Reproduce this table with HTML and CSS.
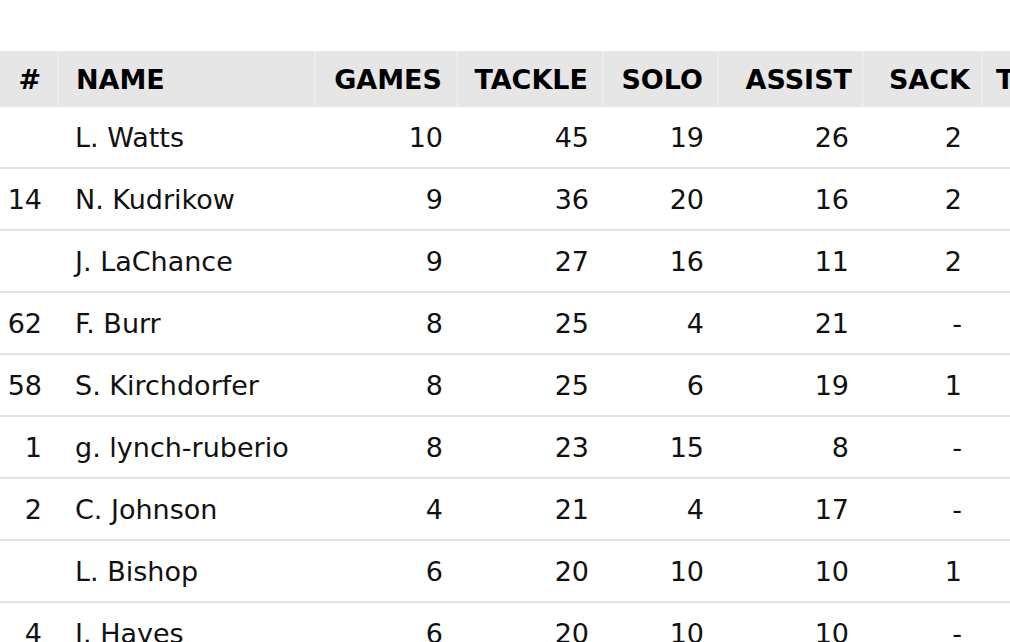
FILE: index.html
```html
<!DOCTYPE html>
<html>
<head>
<meta charset="utf-8">
<link rel="stylesheet" href="styles.css">
</head>
<body>
<div class="wrap">
<table class="stats">
  <colgroup>
    <col class="c-num"><col class="c-name"><col class="c-games"><col class="c-tackle"><col class="c-solo"><col class="c-assist"><col class="c-sack"><col class="c-tfl">
  </colgroup>
  <thead>
    <tr><th class="num">#</th><th class="name">NAME</th><th>GAMES</th><th>TACKLE</th><th>SOLO</th><th class="assist">ASSIST</th><th class="sack">SACK</th><th class="tfl">TFL</th></tr>
  </thead>
  <tbody>
    <tr><td class="num"></td><td class="name">L. Watts</td><td>10</td><td>45</td><td>19</td><td>26</td><td class="sack">2</td><td>5</td></tr>
    <tr><td class="num">14</td><td class="name">N. Kudrikow</td><td>9</td><td>36</td><td>20</td><td>16</td><td class="sack">2</td><td>4</td></tr>
    <tr><td class="num"></td><td class="name">J. LaChance</td><td>9</td><td>27</td><td>16</td><td>11</td><td class="sack">2</td><td>3</td></tr>
    <tr><td class="num">62</td><td class="name">F. Burr</td><td>8</td><td>25</td><td>4</td><td>21</td><td class="sack">-</td><td>-</td></tr>
    <tr><td class="num">58</td><td class="name">S. Kirchdorfer</td><td>8</td><td>25</td><td>6</td><td>19</td><td class="sack">1</td><td>2</td></tr>
    <tr><td class="num">1</td><td class="name">g. lynch-ruberio</td><td>8</td><td>23</td><td>15</td><td>8</td><td class="sack">-</td><td>1</td></tr>
    <tr><td class="num">2</td><td class="name">C. Johnson</td><td>4</td><td>21</td><td>4</td><td>17</td><td class="sack">-</td><td>-</td></tr>
    <tr><td class="num"></td><td class="name">L. Bishop</td><td>6</td><td>20</td><td>10</td><td>10</td><td class="sack">1</td><td>1</td></tr>
    <tr><td class="num">4</td><td class="name">J. Hayes</td><td>6</td><td>20</td><td>10</td><td>10</td><td class="sack">-</td><td>-</td></tr>
  </tbody>
</table>
</div>
</body>
</html>
```
FILE: styles.css
```css
html, body {
  margin: 0;
  padding: 0;
  background: #ffffff;
  overflow: hidden;
}
.wrap {
  padding-top: 51px;
  width: 1010px;
  overflow: hidden;
}
.stats {
  border-collapse: collapse;
  table-layout: fixed;
  width: 1102px;
  font-family: "DejaVu Sans", Verdana, sans-serif;
  font-size: 27px;
  color: #111111;
}
.c-num { width: 58px; }
.c-name { width: 257px; }
.c-games { width: 142px; }
.c-tackle { width: 146px; }
.c-solo { width: 115px; }
.c-assist { width: 145px; }
.c-sack { width: 119px; }
.c-tfl { width: 120px; }

.stats th {
  background: #e6e6e6;
  height: 56px;
  padding: 0 14px 0 0;
  font-weight: bold;
  text-align: right;
  color: #000000;
  border-left: 2px solid #ececec;
  white-space: nowrap;
}
.stats th:first-child { border-left: none; }
.stats td {
  height: 60px;
  padding: 0 14px 0 0;
  text-align: right;
  border-bottom: 2px solid #e3e3e3;
  white-space: nowrap;
}
.stats .num { padding-right: 16px; }
.stats .name { text-align: left; padding-left: 17px; }
.stats th.assist { padding-right: 10px; }
.stats th.sack { padding-right: 11px; }
.stats td.sack { padding-right: 20px; }
.stats th.tfl { text-align: left; padding-left: 13px; }
```
